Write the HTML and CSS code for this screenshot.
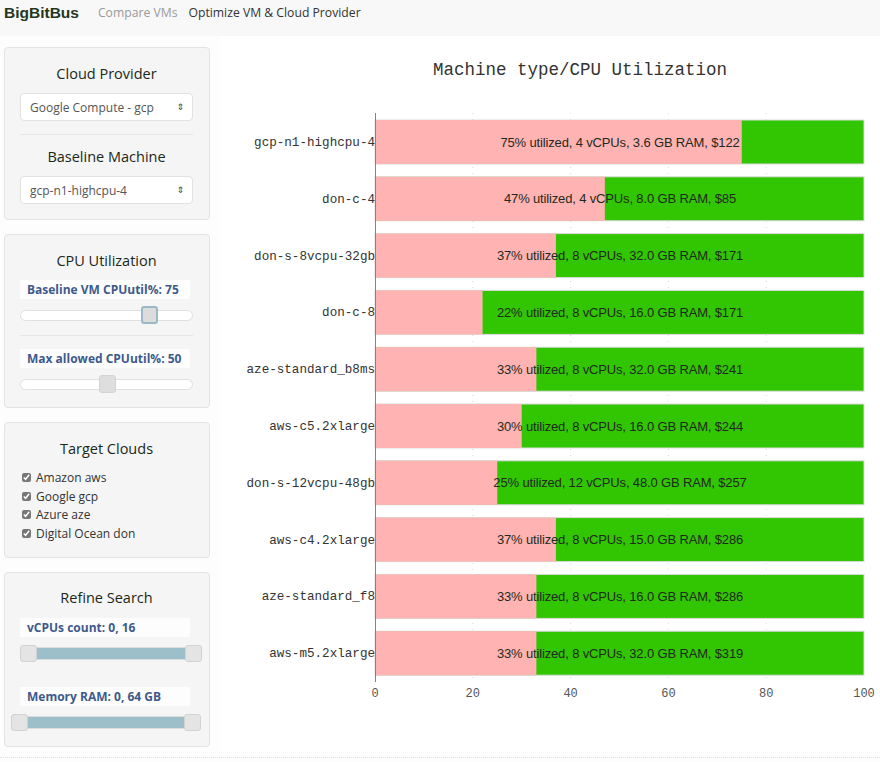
FILE: index.html
```html
<!DOCTYPE html>
<html>
<head>
<meta charset="utf-8">
<link rel="stylesheet" href="styles.css">
</head>
<body>
<nav class="navbar">
  <span class="brand">BigBitBus</span>
  <span class="nav-link muted">Compare VMs</span>
  <span class="nav-link active">Optimize VM &amp; Cloud Provider</span>
</nav>
<div class="main">
  <aside class="sidebar">
    <section class="panel p1">
      <h3 class="panel-title">Cloud Provider</h3>
      <div class="select"><span>Google Compute - gcp</span><span class="caret">&#8661;</span></div>
      <hr class="sep">
      <h3 class="panel-title t2">Baseline Machine</h3>
      <div class="select"><span>gcp-n1-highcpu-4</span><span class="caret">&#8661;</span></div>
    </section>
    <section class="panel p2">
      <h3 class="panel-title">CPU Utilization</h3>
      <div class="label">Baseline VM CPUutil%: 75</div>
      <div class="slider">
        <div class="track"></div>
        <div class="handle focus" style="left:121px"></div>
      </div>
      <hr class="sep sep2">
      <div class="label l2">Max allowed CPUutil%: 50</div>
      <div class="slider">
        <div class="track"></div>
        <div class="handle" style="left:79px"></div>
      </div>
    </section>
    <section class="panel p3">
      <h3 class="panel-title">Target Clouds</h3>
      <label class="check"><input type="checkbox" checked> Amazon aws</label>
      <label class="check"><input type="checkbox" checked> Google gcp</label>
      <label class="check"><input type="checkbox" checked> Azure aze</label>
      <label class="check"><input type="checkbox" checked> Digital Ocean don</label>
    </section>
    <section class="panel p4">
      <h3 class="panel-title">Refine Search</h3>
      <div class="label">vCPUs count: 0, 16</div>
      <div class="range r1">
        <div class="rtrack"></div>
        <div class="rfill"></div>
        <div class="rhandle left"></div>
        <div class="rhandle right"></div>
      </div>
      <div class="label l3">Memory RAM: 0, 64 GB</div>
      <div class="range r2">
        <div class="rtrack"></div>
        <div class="rfill"></div>
        <div class="rhandle left"></div>
        <div class="rhandle right"></div>
      </div>
    </section>
  </aside>
  <div class="chart">
    <svg width="660" height="716" viewBox="0 0 660 716" xmlns="http://www.w3.org/2000/svg">
      <text class="title" x="360" y="39" text-anchor="middle">Machine type/CPU Utilization</text>
      <g class="grid">
        <line x1="252.8" y1="77" x2="252.8" y2="646"/>
        <line x1="350.6" y1="77" x2="350.6" y2="646"/>
        <line x1="448.4" y1="77" x2="448.4" y2="646"/>
        <line x1="546.2" y1="77" x2="546.2" y2="646"/>
      </g>
      <g class="bars">
        <rect class="g" x="155" y="84" width="489" height="44"/><rect class="p" x="155" y="84" width="366.75" height="44"/>
        <rect class="g" x="155" y="140.8" width="489" height="44"/><rect class="p" x="155" y="140.8" width="229.83" height="44"/>
        <rect class="g" x="155" y="197.6" width="489" height="44"/><rect class="p" x="155" y="197.6" width="180.93" height="44"/>
        <rect class="g" x="155" y="254.4" width="489" height="44"/><rect class="p" x="155" y="254.4" width="107.58" height="44"/>
        <rect class="g" x="155" y="311.2" width="489" height="44"/><rect class="p" x="155" y="311.2" width="161.37" height="44"/>
        <rect class="g" x="155" y="368" width="489" height="44"/><rect class="p" x="155" y="368" width="146.7" height="44"/>
        <rect class="g" x="155" y="424.8" width="489" height="44"/><rect class="p" x="155" y="424.8" width="122.25" height="44"/>
        <rect class="g" x="155" y="481.6" width="489" height="44"/><rect class="p" x="155" y="481.6" width="180.93" height="44"/>
        <rect class="g" x="155" y="538.4" width="489" height="44"/><rect class="p" x="155" y="538.4" width="161.37" height="44"/>
        <rect class="g" x="155" y="595.2" width="489" height="44"/><rect class="p" x="155" y="595.2" width="161.37" height="44"/>
      </g>
      <g class="bartext" text-anchor="middle">
        <text x="400" y="110.5">75% utilized, 4 vCPUs, 3.6 GB RAM, $122</text>
        <text x="400" y="167.3">47% utilized, 4 vCPUs, 8.0 GB RAM, $85</text>
        <text x="400" y="224.1">37% utilized, 8 vCPUs, 32.0 GB RAM, $171</text>
        <text x="400" y="280.9">22% utilized, 8 vCPUs, 16.0 GB RAM, $171</text>
        <text x="400" y="337.7">33% utilized, 8 vCPUs, 32.0 GB RAM, $241</text>
        <text x="400" y="394.5">30% utilized, 8 vCPUs, 16.0 GB RAM, $244</text>
        <text x="400" y="451.3">25% utilized, 12 vCPUs, 48.0 GB RAM, $257</text>
        <text x="400" y="508.1">37% utilized, 8 vCPUs, 15.0 GB RAM, $286</text>
        <text x="400" y="564.9">33% utilized, 8 vCPUs, 16.0 GB RAM, $286</text>
        <text x="400" y="621.7">33% utilized, 8 vCPUs, 32.0 GB RAM, $319</text>
      </g>
      <g class="ylabels" text-anchor="end">
        <text x="155" y="110">gcp-n1-highcpu-4</text>
        <text x="155" y="166.8">don-c-4</text>
        <text x="155" y="223.6">don-s-8vcpu-32gb</text>
        <text x="155" y="280.4">don-c-8</text>
        <text x="155" y="337.2">aze-standard_b8ms</text>
        <text x="155" y="394">aws-c5.2xlarge</text>
        <text x="155" y="450.8">don-s-12vcpu-48gb</text>
        <text x="155" y="507.6">aws-c4.2xlarge</text>
        <text x="155" y="564.4">aze-standard_f8</text>
        <text x="155" y="621.2">aws-m5.2xlarge</text>
      </g>
      <line class="axis" x1="155.5" y1="77" x2="155.5" y2="646"/>
      <g class="xlabels" text-anchor="middle">
        <text x="155" y="661">0</text>
        <text x="252.8" y="661">20</text>
        <text x="350.6" y="661">40</text>
        <text x="448.4" y="661">60</text>
        <text x="546.2" y="661">80</text>
        <text x="644" y="661">100</text>
      </g>
    </svg>
  </div>
</div>
<div class="footer-line"></div>
</body>
</html>
```

FILE: styles.css
```css
html, body {
  margin: 0;
  padding: 0;
}
body {
  background: #fdfdfd;
  font-family: "Open Sans", "Noto Sans", sans-serif;
  color: #333;
  width: 880px;
  height: 762px;
  overflow: hidden;
}
.navbar {
  height: 36px;
  background: #f8f8f8;
  display: flex;
  align-items: flex-start;
  box-sizing: border-box;
  padding-top: 2px;
}
.brand {
  font-family: "Liberation Sans", Arial, sans-serif;
  font-weight: bold;
  font-size: 15.5px;
  line-height: 22px;
  color: #24361f;
  margin-left: 4px;
}
.nav-link {
  font-size: 12.2px;
  line-height: 22px;
  margin-left: 19px;
}
.nav-link.muted { color: #9a9a9a; }
.nav-link.active { color: #333; margin-left: 11px; }

.main {
  display: flex;
  align-items: flex-start;
}
.sidebar {
  width: 206px;
  margin-left: 4px;
  padding-top: 11px;
  display: flex;
  flex-direction: column;
  gap: 14px;
}
.panel {
  background: #f5f5f5;
  border: 1px solid #e3e3e3;
  border-radius: 4px;
  padding: 15px 16px 15px 15px;
  display: flex;
  flex-direction: column;
}
.panel-title {
  margin: 0;
  font-weight: normal;
  font-size: 14.5px;
  line-height: 22px;
  text-align: center;
  color: #1c2818;
}
.select {
  margin-top: 8px;
  height: 28px;
  box-sizing: border-box;
  background: #fff;
  border: 1px solid #e2e2e2;
  border-radius: 4px;
  display: flex;
  align-items: center;
  justify-content: space-between;
  padding: 0 8px 0 9px;
  font-size: 12px;
  color: #555;
}
.caret {
  font-size: 9px;
  color: #444;
  font-family: "DejaVu Sans", sans-serif;
}
.sep {
  border: 0;
  border-top: 1px solid #e6e6e6;
  margin: 13px 0 0 0;
  height: 0;
}
.t2 { margin-top: 11px; }

.p2 { padding-bottom: 14px; }
.label {
  margin-top: 8px;
  height: 19px;
  background: #fdfdfd;
  font-weight: bold;
  font-size: 12px;
  line-height: 19px;
  color: #3d5a8c;
  padding-left: 7px;
  margin-right: 3px;
}
.slider {
  position: relative;
  margin-top: 7px;
  height: 18px;
}
.track {
  position: absolute;
  left: 0;
  right: 0;
  top: 4px;
  height: 11px;
  box-sizing: border-box;
  background: #fff;
  border: 1px solid #e0e0e0;
  border-radius: 6px;
}
.handle {
  position: absolute;
  top: 0;
  width: 17px;
  height: 18px;
  box-sizing: border-box;
  background: #dedede;
  border: 1px solid #d3d3d3;
  border-radius: 3px;
}
.handle.focus {
  border: 2px solid #99bac6;
  background: #dcdcdc;
}
.sep2 { margin-top: 11px; }
.l2 { margin-top: 13px; }

.p3 { padding-bottom: 14px; }
.check {
  display: flex;
  align-items: center;
  height: 18.75px;
  font-size: 12px;
  color: #333;
  padding-left: 1px;
}
.check:first-of-type { margin-top: 8px; }
.check input {
  width: 9px;
  height: 9px;
  margin: 0 5px 0 1px;
  accent-color: #777;
}

.p4 { padding-top: 14px; padding-bottom: 15px; }
.p4 .label { margin-top: 9px; }
.p4 .l3 { margin-top: 25px; }
.range {
  position: relative;
  height: 17px;
}
.r1 { margin-top: 8px; margin-right: -9px; }
.r2 { margin-top: 8px; margin-left: -9px; margin-right: -8px; }
.rtrack {
  position: absolute;
  left: 0; right: 0;
  top: 2px;
  height: 13px;
  background: #f2f2f2;
  border: 1px solid #dcdcdc;
  border-radius: 4px;
  box-sizing: border-box;
}
.rfill {
  position: absolute;
  left: 12px; right: 12px;
  top: 3px;
  height: 11px;
  background: #9dbfca;
}
.rhandle {
  position: absolute;
  top: 0;
  width: 17px;
  height: 17px;
  box-sizing: border-box;
  background: #e4e4e4;
  border: 1px solid #d2d2d2;
  border-radius: 3px;
}
.rhandle.left { left: 0; }
.rhandle.right { right: 0; }

.chart {
  margin-left: 10px;
  background: #fff;
  height: 716px;
}
.chart svg { display: block; }
.title {
  font-family: "Liberation Mono", "Courier New", monospace;
  font-size: 17.5px;
  fill: #333;
}
.grid line {
  stroke: #d8d8d8;
  stroke-width: 1;
  stroke-dasharray: 1 5;
}
.bars .p { fill: #ffb3b3; }
.bars .g { fill: #31c502; stroke: #dcdcdc; stroke-width: 1; }
.bartext text {
  font-family: "Liberation Sans", Arial, sans-serif;
  font-size: 13px;
  fill: #1f2a1a;
  letter-spacing: -0.15px;
}
.ylabels text {
  font-family: "Liberation Mono", "Courier New", monospace;
  font-size: 12.6px;
  fill: #333;
}
.axis { stroke: #8d8467; stroke-width: 1; }
.xlabels text {
  font-family: "Liberation Mono", "Courier New", monospace;
  font-size: 12px;
  fill: #555;
}
.footer-line {
  border-top: 1px dotted #e0e0e0;
  margin-top: 5px;
}
```
